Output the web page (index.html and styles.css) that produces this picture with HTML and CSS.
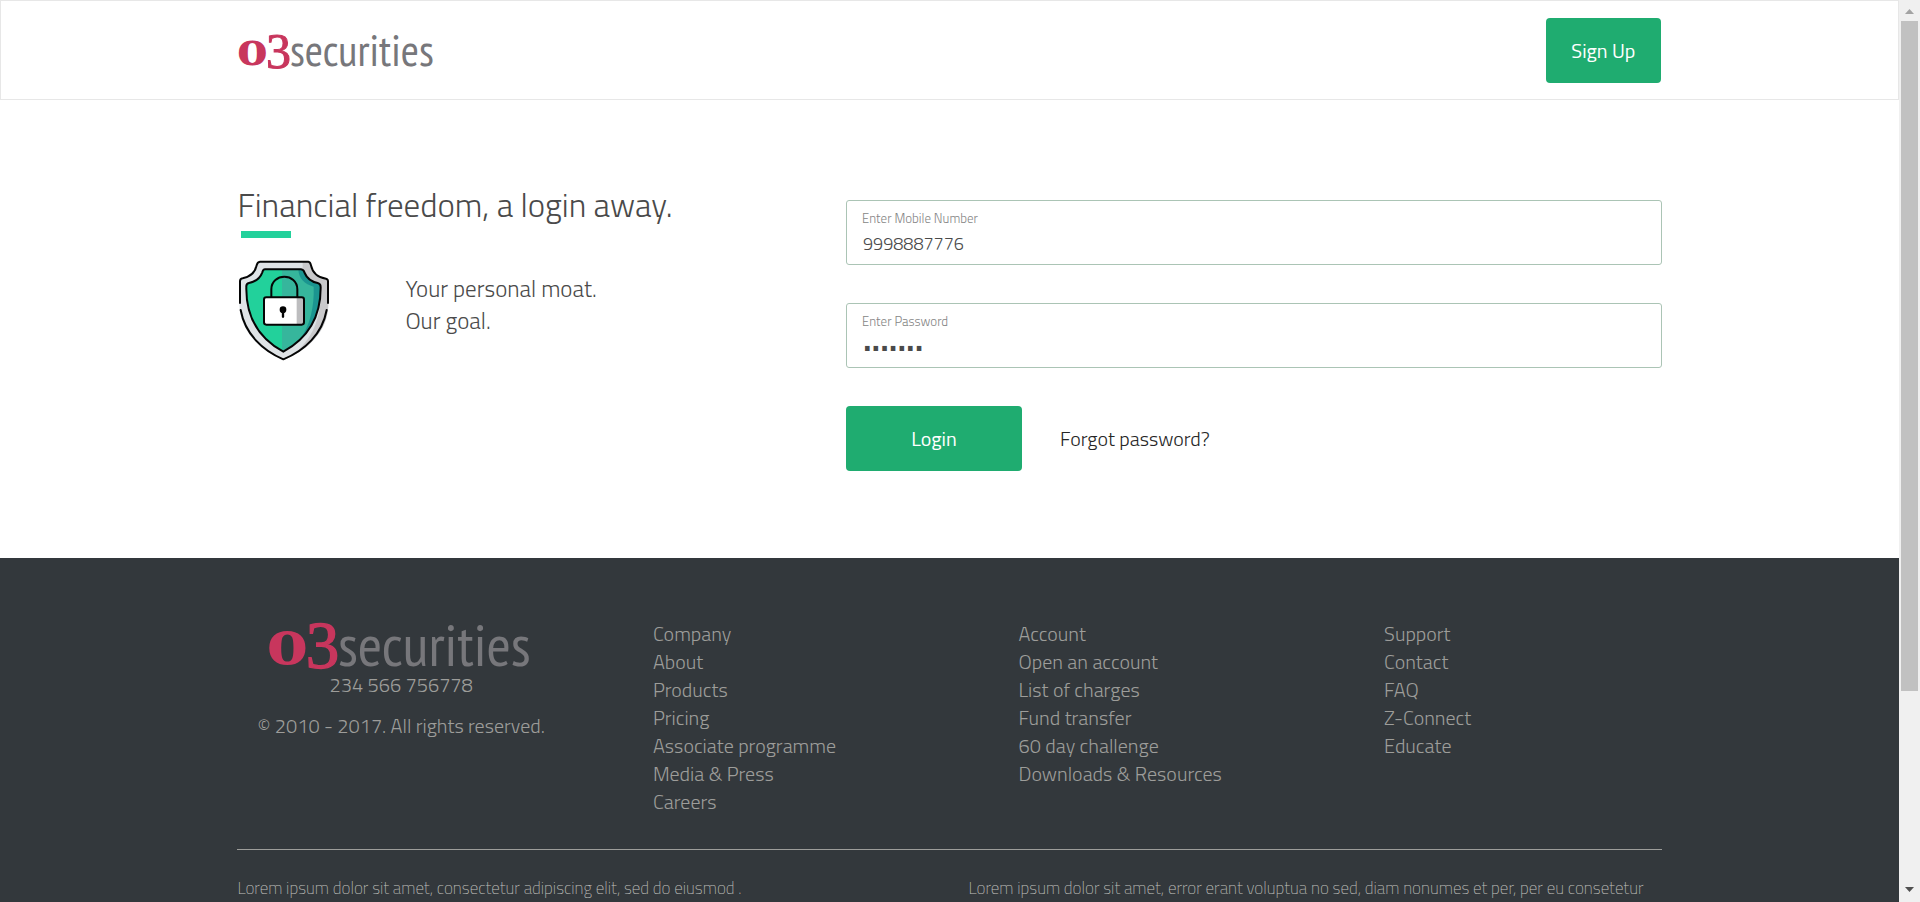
FILE: index.html
```html
<!DOCTYPE html>
<html lang="en">
<head>
<meta charset="utf-8">
<title>o3securities – Login</title>
<link rel="stylesheet" href="styles.css">
</head>
<body>
<div class="window">
<div class="page">
  <header class="topbar">
    <div class="container topbar-row">
      <a class="brand" href="#" aria-label="o3securities">
        <svg class="logo" viewBox="0 0 198 38">
          <text class="mark" x="-1" y="33" font-size="46">o</text>
          <text class="digit" x="28" y="36" font-size="50">3</text>
          <text class="word" x="52" y="34" font-size="44">securities</text>
        </svg>
      </a>
      <button class="btn btn-signup" type="button">Sign Up</button>
    </div>
  </header>

  <main class="container login">
    <section class="pitch">
      <h1 class="title">Financial freedom, a login away.</h1>
      <div class="rule"></div>
      <div class="moat">
        <svg class="shield" viewBox="25 25 282 312" aria-hidden="true">
          <path fill="#dfe3e6" d="M94 33H239Q245 34 247 44 254 78 292 84 299 85 299 92V160C299 240 235 300 164 328 95 300 32 240 32 160V92Q32 84 42 83 77 76 84 44 86 34 94 33Z"/>
          <path fill="#c9c9cb" d="M222 33H239Q245 34 247 44 254 78 292 84 299 85 299 92V160C299 235 245 290 190 316 250 265 278 210 278 105 246 98 232 80 222 56Z"/>
          <path fill="#22d19b" d="M109 56H217Q225 57 228 67 238 91 267 97 276 99 276 109C277 210 226 269 164 303 102 269 51 210 53 109Q52 99 61 97 91 91 101 65 103 56 109 56Z"/>
          <path fill="#36b69c" d="M160 56H217Q225 57 228 67 238 91 267 97 276 99 276 109C277 210 226 269 164 303L160 300Z"/>
          <path fill="#1b9590" d="M209 56H217Q225 57 228 67 238 91 267 97 276 99 276 109C276 181 251 234 210 271 246 225 257 165 255 108 228 101 210 84 209 56Z"/>
          <g fill="none" stroke="#050505" stroke-width="6" stroke-linecap="round" stroke-linejoin="round">
            <path d="M34 157V92Q34 84 42 83 77 76 84 44 86 34 94 33H239Q245 34 247 44 254 78 292 84 298 85 298 92V157"/>
            <path d="M36 178C49 250 102 300 164 326 228 300 281 250 294 178"/>
            <path d="M109 56H217Q225 57 228 67 238 91 267 97 276 99 276 109C277 210 226 269 164 303 102 269 51 210 53 109Q52 99 61 97 91 91 101 65 103 56 109 56Z"/>
            <path d="M128 138V116C128 66 206 66 206 116V138"/>
          </g>
          <rect x="106" y="140" width="120" height="82" rx="7" fill="#fff"/>
          <path fill="#bdbdbf" d="M204 140H220Q226 140 226 147V215Q226 222 220 222H204Z"/>
          <rect x="106" y="140" width="120" height="82" rx="7" fill="none" stroke="#050505" stroke-width="6"/>
          <circle cx="163" cy="177" r="10"/>
          <path stroke="#050505" stroke-width="7" stroke-linecap="round" d="M163 178V198"/>
        </svg>
        <p class="moat-text">Your personal moat.<br>Our goal.</p>
      </div>
    </section>

    <form class="form">
      <div class="field">
        <label for="mobile">Enter Mobile Number</label>
        <input id="mobile" type="text" value="9998887776">
      </div>
      <div class="field">
        <label for="password">Enter Password</label>
        <input id="password" class="secret" type="password" value="abcdefg">
      </div>
      <div class="actions">
        <button class="btn btn-login" type="button">Login</button>
        <a class="forgot" href="#">Forgot password?</a>
      </div>
    </form>
  </main>

  <footer class="footer">
    <div class="container">
      <div class="footer-columns">
        <div class="about">
          <svg class="logo-large" viewBox="0 0 198 38" role="img" aria-label="o3securities">
            <text class="mark" x="-1" y="33" font-size="46">o</text>
            <text class="digit" x="28" y="36" font-size="50">3</text>
            <text class="word" x="52" y="34" font-size="44">securities</text>
          </svg>
          <p class="phone">234 566 756778</p>
          <p class="copyright">© 2010 - 2017. All rights reserved.</p>
        </div>
        <ul class="links">
          <li><a href="#">Company</a></li>
          <li><a href="#">About</a></li>
          <li><a href="#">Products</a></li>
          <li><a href="#">Pricing</a></li>
          <li><a href="#">Associate programme</a></li>
          <li><a href="#">Media &amp; Press</a></li>
          <li><a href="#">Careers</a></li>
        </ul>
        <ul class="links">
          <li><a href="#">Account</a></li>
          <li><a href="#">Open an account</a></li>
          <li><a href="#">List of charges</a></li>
          <li><a href="#">Fund transfer</a></li>
          <li><a href="#">60 day challenge</a></li>
          <li><a href="#">Downloads &amp; Resources</a></li>
        </ul>
        <ul class="links">
          <li><a href="#">Support</a></li>
          <li><a href="#">Contact</a></li>
          <li><a href="#">FAQ</a></li>
          <li><a href="#">Z-Connect</a></li>
          <li><a href="#">Educate</a></li>
        </ul>
      </div>
      <div class="legal">
        <p>Lorem ipsum dolor sit amet, consectetur adipiscing elit, sed do eiusmod .</p>
        <p>Lorem ipsum dolor sit amet, error erant voluptua no sed, diam nonumes et per, per eu consetetur</p>
      </div>
    </div>
  </footer>
</div>
<div class="scrollbar" aria-hidden="true">
  <svg class="arrow" viewBox="0 0 9 5"><path fill="#a3a3a3" d="M0 5 4.500 0 9 5Z"/></svg>
  <div class="track"><div class="thumb"></div></div>
  <svg class="arrow" viewBox="0 0 9 5"><path fill="#505050" d="M0 0 4.500 5 9 0Z"/></svg>
</div>
</div>
</body>
</html>
```
FILE: styles.css
```css
* {
  box-sizing: border-box;
}

body {
  margin: 0;
  background: #fff;
  color: #4a4a4a;
  font-family: "Titillium Web", Roboto, "Open Sans", sans-serif;
  font-size: 20px;
  font-weight: 300;
  line-height: 28px;
}

h1, p, ul {
  margin: 0;
  padding: 0;
}

a {
  color: inherit;
  text-decoration: none;
}

.window {
  display: grid;
  grid-template-columns: minmax(0, 1fr) 21px;
  height: 100vh;
  overflow: hidden;
}

.page {
  display: flex;
  flex-direction: column;
  overflow: hidden;
}

.container {
  width: 75%;
  margin: 0 auto;
}

/* Header */
.topbar {
  flex: none;
  padding: 17px 0 16px;
  border: 1px solid #e7e7e7;
}

.topbar-row {
  display: flex;
  align-items: center;
  justify-content: space-between;
}

.brand {
  display: flex;
}

.logo {
  width: 198px;
  height: 38px;
  overflow: visible;
}

.mark {
  fill: #c8365d;
  font-family: "DejaVu Serif", serif;
  font-weight: 700;
}

.digit {
  fill: #c8365d;
  stroke: #c8365d;
  stroke-width: 1px;
  font-family: "Liberation Serif", serif;
  font-weight: 400;
}

.word {
  fill: #77777b;
  font-family: "PT Sans Narrow", "DejaVu Sans Condensed", sans-serif;
  font-weight: 400;
}

.btn {
  height: 65px;
  border: 0;
  border-radius: 4px;
  background: #1fac70;
  color: #fff;
  font: inherit;
  font-weight: 400;
}

.btn-signup {
  width: 115px;
}

/* Login */
.login {
  display: grid;
  grid-template-columns: 1fr 1.34fr;
  flex: none;
  padding: 84px 0 87px;
}

.title {
  font-size: 33px;
  font-weight: 300;
  line-height: 43px;
}

.rule {
  width: 50px;
  height: 7px;
  margin: 4px 0 0 4px;
  background: #22d19b;
}

.moat {
  display: flex;
  align-items: center;
  gap: 74px;
  margin-top: 21px;
}

.shield {
  width: 94px;
  height: 104px;
}

.moat-text {
  padding-bottom: 12px;
  font-size: 23px;
  line-height: 32px;
}

.form {
  padding-top: 16px;
}

.field {
  display: flex;
  flex-direction: column;
  height: 65px;
  margin-bottom: 38px;
  padding: 9px 15px 0;
  border: 1px solid #abc4b5;
  border-radius: 3px;
}

.field label {
  color: #858585;
  font-size: 13px;
  line-height: 16px;
}

.field input {
  width: 100%;
  height: 34px;
  padding: 0 1px;
  border: 0;
  outline: 0;
  background: none;
  color: #4a4a4a;
  font: inherit;
  font-size: 18px;
}

.field .secret {
  -webkit-text-security: square;
}

.actions {
  display: flex;
  align-items: center;
  gap: 38px;
}

.btn-login {
  width: 176px;
}

.forgot {
  color: #262626;
}

/* Footer */
.footer {
  flex: 1 0 auto;
  padding-top: 62px;
  background: #33383c;
  color: #9d9d9a;
}

.footer-columns {
  display: grid;
  grid-template-columns: repeat(4, 1fr);
  gap: 38px;
  padding-bottom: 33px;
  border-bottom: 1px solid #9d9d9a;
}

.about {
  text-align: center;
}

.logo-large {
  display: block;
  width: 268px;
  height: 51px;
  margin: 0 auto;
  overflow: visible;
}

.copyright {
  margin-top: 13px;
}

.links {
  padding-left: 50px;
  list-style: none;
  white-space: nowrap;
}

.legal {
  display: grid;
  grid-template-columns: 1fr 1fr;
  gap: 38px;
  padding: 24px 0;
  color: #c0c0bc;
  font-size: 17px;
  font-weight: 200;
  white-space: nowrap;
}

/* Scrollbar */
.scrollbar {
  display: flex;
  flex-direction: column;
  align-items: center;
  justify-content: space-between;
  gap: 7px;
  padding: 9px 0 10px;
  background: #f0f0f0;
}

.arrow {
  flex: none;
  width: 9px;
  height: 5px;
}

.track {
  flex: 1;
  width: 17px;
}

.thumb {
  height: 78%;
  background: #c1c1c1;
}
```
